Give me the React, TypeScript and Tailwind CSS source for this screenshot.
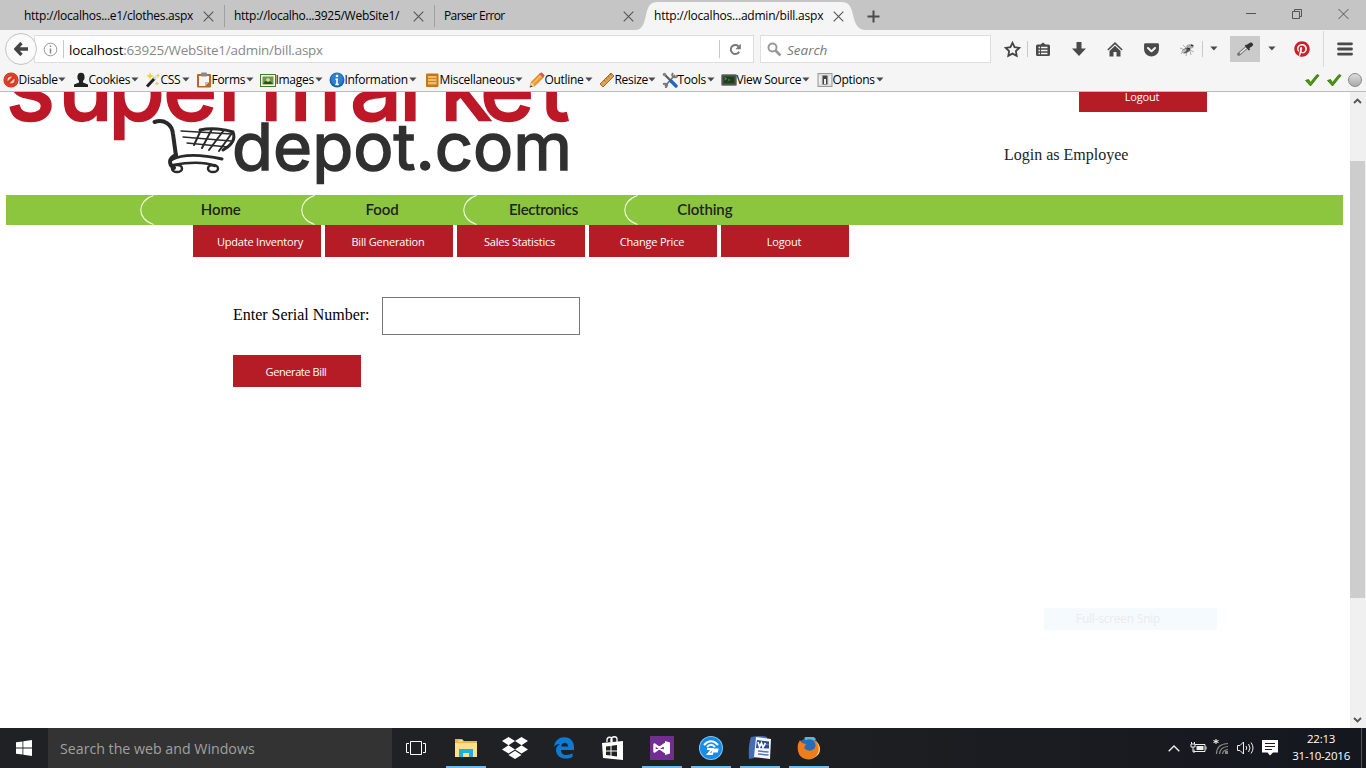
import React from "react";
import { FaPinterest, FaDropbox, FaGetPocket } from "react-icons/fa";

const ui = "font-['Open_Sans','Noto_Sans',sans-serif]";

const X = ({ c = "#555" }: { c?: string }) => (
  <svg width="11" height="11" viewBox="0 0 11 11" className="shrink-0">
    <path d="M.7.7l9.6 9.6M10.3.7L.7 10.3" stroke={c} strokeWidth="1.1" fill="none" />
  </svg>
);

const Caret = () => (
  <svg width="8" height="5" viewBox="0 0 8 5" className="shrink-0">
    <path d="M.3.5h7.2L3.9 4.4z" fill="#4a4a4a" />
  </svg>
);

function TabBar() {
  return (
    <div className="flex h-[30px] w-full items-stretch bg-[#c5c5c5] text-[12px] text-black">
      <div className="flex w-[224px] items-center pt-[2px] pl-[24px]">
        <span className="w-[178.5px] whitespace-nowrap tracking-[-0.27px]">http://localhos...e1/clothes.aspx</span>
        <X />
      </div>
      <div className="mt-[5px] h-[22px] w-px bg-[#a0a0a0]" />
      <div className="flex w-[209px] items-center pt-[2px] pl-[9px]">
        <span className="w-[178.5px] whitespace-nowrap tracking-[-0.28px]">http://localho...3925/WebSite1/</span>
        <X />
      </div>
      <div className="mt-[5px] h-[22px] w-px bg-[#a0a0a0]" />
      <div className="flex w-[200px] items-center pt-[2px] pl-[9px]">
        <span className="w-[178.5px] whitespace-nowrap tracking-[-0.6px]">Parser Error</span>
        <X />
      </div>
      <div className="relative flex w-[233px] items-center pt-[2px] pl-[19px]">
        <svg className="absolute left-0 top-0" width="233" height="30" viewBox="0 0 233 30">
          <path d="M0 30C8 30 9 23 11 15C13 6 15 2 23 2H206C214 2 216 6 218 15C220 23 222 30 231 30Z" fill="#f5f5f5" />
        </svg>
        <span className="relative w-[178.5px] whitespace-nowrap tracking-[-0.21px]">http://localhos...admin/bill.aspx</span>
        <span className="relative"><X /></span>
      </div>
      <div className="flex flex-1 items-center pt-[2px]">
        <svg width="13" height="13" viewBox="0 0 13 13" className="-ml-px"><path d="M6.5.5v12M.5 6.5h12" stroke="#4b4b4b" strokeWidth="2" /></svg>
      </div>
      <div className="flex w-[120px] items-start gap-[36px] pt-[8px]">
        <svg width="10" height="12" viewBox="0 0 10 12"><path d="M0 5.5h10" stroke="#555" /></svg>
        <svg width="10" height="12" viewBox="0 0 10 12" fill="none" stroke="#555"><path d="M.5 3.5h7v7h-7zM2.5 3.5v-2h7v7h-2" /></svg>
        <svg width="11" height="12" viewBox="0 0 11 12"><path d="M.5 1l10 10M10.5 1l-10 10" stroke="#555" /></svg>
      </div>
    </div>
  );
}

const Fly = () => (
  <svg width="17" height="15" viewBox="0 0 17 15" className="shrink-0">
    <path d="M2 12l3-4M7 14l1-5M12 13l-1-4M1 6l5 2M4 3l4 4M15 10l-4-2" stroke="#999" strokeWidth=".8" />
    <ellipse cx="7" cy="8.5" rx="4.5" ry="2.3" transform="rotate(-25 7 8)" fill="#555" />
    <ellipse cx="11" cy="4.5" rx="4" ry="2.3" transform="rotate(-15 11 4.5)" fill="#aaa" />
    <ellipse cx="5" cy="9" rx="3" ry="1.3" transform="rotate(-30 5 9)" fill="#bbb" />
    <path d="M12 3l2 1M8 6l3 1" stroke="#222" strokeWidth="1.2" />
  </svg>
);

function NavBar() {
  return (
    <div className="flex h-[38px] w-full items-center bg-[#f5f5f5]">
      <div className="z-10 ml-[5px] flex h-[32px] w-[32px] shrink-0 items-center justify-center rounded-full border border-[#c4c4c4] bg-[#fafafa]">
        <svg width="14" height="14" viewBox="0 0 14 14"><path d="M7.5 1L1.8 7l5.700 6M2.500 7H14" fill="none" stroke="#444" strokeWidth="3.3" /></svg>
      </div>
      <div className="-ml-[3px] flex h-[28px] w-[720px] shrink-0 items-center border border-[#dedede] bg-white">
        <svg width="15" height="15" viewBox="0 0 15 15" className="ml-[8px]"><circle cx="7.5" cy="7.5" r="6.3" fill="none" stroke="#999" /><path d="M7.5 6.5v5M7.5 3.5v1.6" stroke="#888" strokeWidth="1.5" /></svg>
        <div className="ml-[5px] h-[18px] w-px bg-[#c8c8c8]" />
        <span className="ml-[5px] pt-[2px] text-[13.4px] tracking-[-0.2px] whitespace-nowrap text-[#888]"><span className="text-black">localhost</span>:63925/WebSite1/admin/bill.aspx</span>
        <div className="ml-auto h-[18px] w-px bg-[#c8c8c8]" />
        <svg width="13" height="13" viewBox="0 0 13 13" className="mr-[11px] ml-[9px]"><path d="M10.2 8.8A4.5 4.5 0 1 1 9.4 3.2" fill="none" stroke="#777" strokeWidth="1.9" /><path d="M11.8.7v5.6H6.3z" fill="#777" /></svg>
      </div>
      <div className="ml-[6px] flex h-[28px] w-[231px] shrink-0 items-center border border-[#dedede] bg-white">
        <svg width="15" height="15" viewBox="0 0 15 15" className="ml-[6px]"><circle cx="5.5" cy="5.5" r="4" fill="none" stroke="#999" strokeWidth="2" /><path d="M8.5 8.5l5 5" stroke="#999" strokeWidth="2.6" /></svg>
        <span className="ml-[5px] pt-[2px] text-[13.5px] text-[#777] italic">Search</span>
      </div>
      <svg width="17" height="17" viewBox="0 0 17 17" className="ml-[13px] shrink-0"><path d="M8.5 1.8l2.1 4.3 4.7.7-3.4 3.3.8 4.7-4.2-2.2-4.2 2.2.8-4.7L1.7 6.8l4.7-.7z" fill="none" stroke="#444" strokeWidth="1.8" /></svg>
      <div className="ml-[6px] h-[16px] w-px bg-[#c8c8c8]" />
      <svg width="14" height="15" viewBox="0 0 14 15" className="ml-[8px] shrink-0"><path d="M1.5 2.5h3l2.5-2 2.5 2h3q1.5 0 1.5 1.5v8.5q0 1.5-1.5 1.5h-11Q0 14 0 12.5V4q0-1.5 1.5-1.5z" fill="#4a4a4a" /><path d="M2.5 5.5h1.5M5 5.5h6.5M2.5 8.5h1.5M5 8.5h6.5M2.5 11.5h1.5M5 11.5h6.5" stroke="#f5f5f5" strokeWidth="1.3" /></svg>
      <svg width="14" height="14" viewBox="0 0 14 14" className="ml-[22px] shrink-0"><path d="M4.5 0h5v6.5H14l-7 7.5-7-7.5h4.5z" fill="#4a4a4a" /></svg>
      <svg width="16" height="15" viewBox="0 0 16 15" className="ml-[21px] shrink-0"><path d="M.8 8L8 1.2 15.2 8" fill="none" stroke="#4a4a4a" strokeWidth="1.6" /><path d="M2.5 9L8 3.8 13.5 9v5.500H9.500V10h-3v4.500h-4z" fill="#4a4a4a" /></svg>
      <FaGetPocket size={17} color="#4a4a4a" className="ml-[20px] shrink-0" />
      <span className="ml-[19px]"><Fly /></span>
      <div className="ml-[6px] h-[16px] w-px bg-[#c8c8c8]" />
      <span className="ml-[7px] flex pb-px"><Caret /></span>
      <div className="ml-[12px] flex h-[26px] w-[30px] items-center justify-center bg-[#cbcbcb]">
        <svg width="17" height="14" viewBox="0 0 17 14"><path d="M1.8 12.2L9 6" stroke="#777" strokeWidth="3.4" strokeLinecap="round" /><path d="M3 11.2L10 5.2" stroke="#eee" strokeWidth="1.5" /><path d="M11 4.5l3-2" stroke="#333" strokeWidth="4" strokeLinecap="round" /><path d="M8.5 3l4 5" stroke="#333" strokeWidth="2" /></svg>
      </div>
      <span className="ml-[8px] flex pb-px"><Caret /></span>
      <FaPinterest size={16} color="#cb2027" className="ml-[18px] shrink-0" />
      <div className="ml-[13px] h-[36px] w-px bg-[#dadada]" />
      <svg width="16" height="14" viewBox="0 0 16 14" className="ml-[13px] shrink-0"><path d="M1.5 1.8h13M1.5 7h13M1.5 12.2h13" stroke="#4a4a4a" strokeWidth="2.8" strokeLinecap="round" /></svg>
    </div>
  );
}

const devIcons: Record<string, React.ReactNode> = {
  Disable: <><circle cx="8" cy="8" r="5.6" fill="#f3d5cf" stroke="#c22a14" strokeWidth="4" /><circle cx="8" cy="8" r="5.8" fill="none" stroke="#e4432a" strokeWidth="2.4" /><path d="M3.8 12L12 4" stroke="#d93820" strokeWidth="2.8" /></>,
  Cookies: <><ellipse cx="8" cy="5" rx="3.6" ry="4.3" fill="#222" /><path d="M6 8h4v2.5l5 2V15H1v-2.5l5-2z" fill="#222" /></>,
  CSS: <><path d="M2 14.5L10 6" stroke="#222" strokeWidth="3" /><path d="M9 7l2.5-2.5" stroke="#ddd" strokeWidth="3" /><path d="M5 0l1 3 3 1-3 1-1 3-1-3-3-1 3-1zM13 1l.6 2 2 .6-2 .6-.6 2-.6-2-2-.6 2-.6zM12 9l.6 2 2 .6-2 .6-.6 2-.6-2-2-.6 2-.6z" fill="#f0cf28" /></>,
  Forms: <><rect x="1" y="2" width="14" height="13.5" rx="1" fill="#b96722" /><path d="M3 4h10v6l-4 4H3z" fill="#f4f4f4" /><path d="M13 10l-4 4v-4z" fill="#bbb" /><rect x="5" y=".5" width="6" height="4" rx="1" fill="#888" /></>,
  Images: <><rect x=".5" y="2.5" width="15" height="12" fill="#f8f8f0" stroke="#408020" /><rect x="2.5" y="4.5" width="11" height="8" fill="#6d994b" /><path d="M3 12q4-7 10 0z" fill="#294f17" /><circle cx="8" cy="8" r="1.8" fill="#eee" /><circle cx="8" cy="8" r=".9" fill="#eabf25" /></>,
  Information: <><circle cx="8" cy="8" r="7.5" fill="#1767b5" /><circle cx="8" cy="7" r="6" fill="#2f80cf" /><path d="M8 7v5.5M6.5 7.2H9M6.3 12.5h3.5" stroke="#fff" strokeWidth="1.6" /><circle cx="8" cy="4" r="1.3" fill="#fff" /></>,
  Miscellaneous: <><rect x="2" y="1.5" width="12.5" height="13.5" rx="1" fill="#c87517" /><rect x="4" y="4" width="8.5" height="8.5" fill="#f1bb67" /><path d="M4 6.5h8M4 9.5h8" stroke="#c9832d" /></>,
  Outline: <><path d="M1 15l1.5-5L11 1.5l3.5 3.5L6 13.5z" fill="#f39b22" stroke="#b36016" strokeWidth=".7" /><path d="M4 11.5l8-8" stroke="#ffe0a0" /><path d="M10.5 2l2-1.7 3.3 3.3-1.7 2z" fill="#d95459" /><path d="M1 15l1.5-4.5 3 3z" fill="#f4d7a5" /><path d="M.5 15.5l1.8-2 1 1z" fill="#222" /></>,
  Resize: <><path d="M1 12L12 1l3 3L4 15z" fill="#dfa153" stroke="#a86b25" /><path d="M5 8l1.5 1.5M7 6l1.5 1.5M9 4l1.5 1.5M11 2l1.5 1.5" stroke="#98591e" strokeWidth=".7" /></>,
  Tools: <><path d="M3 14L13 3" stroke="#777" strokeWidth="1.8" /><path d="M2 2l7 7" stroke="#555" strokeWidth="2" /><path d="M9 9l5 5" stroke="#2467bd" strokeWidth="3.4" strokeLinecap="round" /><path d="M11 1q-2 3 1 4 3 1 3.5-2M1 12q3-1 4 1 0 2-2 2.5" fill="none" stroke="#777" strokeWidth="2" /><circle cx="2.5" cy="2.5" r="1.8" fill="#888" /></>,
  "View Source": <><rect x=".5" y="2.5" width="15" height="11" rx="1" fill="#555" stroke="#888" /><rect x="2.5" y="4.5" width="11" height="7" fill="#1d3f1c" /><path d="M3.5 5.5l2 1.2-2 1.2M7 8h2" fill="none" stroke="#53c744" strokeWidth=".8" /></>,
  Options: <><rect x="1" y="1.5" width="14" height="13" fill="#ddd" stroke="#999" /><rect x="5.5" y="3.5" width="5" height="9" fill="#444" /><rect x="7" y="7" width="2" height="5" fill="#eee" /><path d="M3 4v8M13 4v8" stroke="#fff" /></>,
};

const devItems = [
  ["Disable", "w-[70px]", "w-[39px]"],
  ["Cookies", "w-[72px]", "w-[42px]"],
  ["CSS", "w-[51px]", "w-[21px]"],
  ["Forms", "w-[64px]", "w-[34px]"],
  ["Images", "w-[69px]", "w-[39px]"],
  ["Information", "w-[95px]", "w-[64px]"],
  ["Miscellaneous", "w-[105px]", "w-[75px]"],
  ["Outline", "w-[70px]", "w-[40px]"],
  ["Resize", "w-[63px]", "w-[33px]"],
  ["Tools", "w-[59px]", "w-[29px]"],
  ["View Source", "w-[96px]", "w-[65px]"],
  ["Options", "w-[70px]", "w-[43px]"],
];

const Check = () => <svg width="16" height="14" viewBox="0 0 16 14"><path d="M1.5 7.5l3-1 2 3L13 1.5l2 1L6.5 13z" fill="#4b9a0b" stroke="#2f7001" strokeWidth=".8" /></svg>;

function DevBar() {
  return (
    <div className="flex h-[24px] w-full items-center border-b border-[#bcbcbc] bg-[#f5f5f5] pl-[2.5px] text-[12px] tracking-[-0.3px] text-black">
      {devItems.map(([name, w, tw]) => (
        <div key={name} className={`flex shrink-0 items-center ${w}`}>
          <svg width="16" height="16" viewBox="0 0 16 16" className="shrink-0">{devIcons[name]}</svg>
          <span className={`shrink-0 whitespace-nowrap ${tw}`}>{name}</span>
          <Caret />
        </div>
      ))}
      <div className="ml-auto flex items-center gap-[6px] pr-[4px]">
        <Check /><Check />
        <div className="h-[14px] w-[14px] rounded-full border border-[#888] bg-linear-to-b from-[#ddd] to-[#aaa]" />
      </div>
    </div>
  );
}

function Logo() {
  return (
    <svg width="600" height="103" viewBox="0 92 600 103" className="block shrink-0">
      <g fontFamily="Inter, sans-serif">
        <text x="6 58 108 163 218 260 350 399 440 480 539" y="120" fontSize="93" fontWeight="400" fill="#bd1828" stroke="#bd1828" strokeWidth="2.5">supermarket</text>
        <text x="232" y="169.5" fontSize="65" fontWeight="400" fill="#303030" stroke="#303030" strokeWidth="1.5" textLength="340" lengthAdjust="spacingAndGlyphs">depot.com</text>
      </g>
      <g fill="none" stroke="#292929" strokeLinecap="round">
        <path d="M154.5 122C164 119 172 124 173 134L176 156" strokeWidth="4" />
        <path d="M176 155C169 158 168 164 174 168" strokeWidth="4" />
        <path d="M171 160C184 153 204 155 222 159" strokeWidth="3" />
        <path d="M173 165C190 162 205 162 215 166" strokeWidth="2.5" />
        <ellipse cx="177" cy="168.5" rx="5" ry="3.6" strokeWidth="2.5" />
        <ellipse cx="213" cy="168.5" rx="5" ry="3.6" strokeWidth="2.5" />
        <path d="M200 130C211 127.5 225 129 233 132Q237 142 223 150" strokeWidth="3" />
        <path d="M181 131L232 134M183 137L231 141M187 143L228 147" strokeWidth="1.3" />
        <path d="M201 130L194 145M212 129L202 148M224 130L209 150M232 133L219 151" strokeWidth="2" />
      </g>
    </svg>
  );
}

const Red = ({ children, shift = "" }: { children: React.ReactNode; shift?: string }) => (
  <button className={`flex h-[32px] w-[128px] shrink-0 items-center justify-center bg-[#b61c26] pt-[2px] text-[11px] tracking-[-0.2px] whitespace-nowrap text-white ${shift}`}>{children}</button>
);

function Page() {
  return (
    <div className="flex h-[636px] w-full bg-white">
      <div className="flex h-full w-[1350px] shrink-0 flex-col overflow-hidden">
        <div className="flex h-[103px] shrink-0 items-start">
          <Logo />
          <div className="ml-[404px] flex h-[103px] flex-col">
            <div className="-mt-[12px] ml-[75px]"><Red shift="pr-[2px]">Logout</Red></div>
            <span className="mt-[31px] font-['Liberation_Serif',serif] text-[16px] leading-[24px] text-[#222]">Login as Employee</span>
          </div>
        </div>
        <div className="ml-[6px] flex h-[30px] w-[1337px] shrink-0 bg-[#8cc63f] pl-[134px]">
          {[
            ["Home", "tracking-[-0.1px]"],
            ["Food", "tracking-[-0.1px]"],
            ["Electronics", "tracking-[-0.35px]"],
            ["Clothing", "tracking-[-0.1px]"],
          ].map(([t, track]) => (
            <div key={t} className={`relative flex h-full w-[161.4px] items-center justify-center pb-px font-['Lato',sans-serif] text-[15px] font-semibold text-[#222] ${track}`}>
              <svg className="absolute top-0 left-0" width="18" height="30" viewBox="0 0 18 30"><path d="M13.5.5C-3.5 6-3.5 24 13.5 29.5" fill="none" stroke="#f2f9e5" strokeWidth="1.1" /></svg>
              {t}
            </div>
          ))}
        </div>
        <div className="flex gap-[4px] pl-[193px]">
          <Red shift="pl-[6px]">Update Inventory</Red>
          <Red shift="pr-[2px]">Bill Generation</Red>
          <Red shift="pr-[3px]">Sales Statistics</Red>
          <Red shift="pr-[2px]">Change Price</Red>
          <Red shift="pr-[2px]">Logout</Red>
        </div>
        <div className="mt-[40px] flex items-center pl-[233px]">
          <span className="w-[149px] pb-[2px] font-['Liberation_Serif',serif] text-[16px] leading-[24px] tracking-[-0.02px] text-black">Enter Serial Number:</span>
          <input className="h-[38px] w-[198px] border border-[#767676] bg-white px-2 text-base outline-none" />
        </div>
        <div className="mt-[20px] pl-[233px]"><Red shift="pr-[2px]"><span className="tracking-[-0.4px]">Generate Bill</span></Red></div>
        <div className="mt-[221px] ml-[1044px] flex h-[22px] w-[173px] shrink-0 items-center bg-[#f5fafe] pl-[32px] text-[12px] tracking-[-0.25px] whitespace-nowrap text-[#ebebed]">Full-screen Snip</div>
      </div>
      <div className="flex h-full w-[16px] shrink-0 flex-col items-center bg-[#f0f0f0]">
        <svg width="9" height="6" viewBox="0 0 9 6" className="mt-[6px] mr-px"><path d="M1 5l3.5-3.5L8 5" fill="none" stroke="#555" strokeWidth="1.9" /></svg>
        <div className="mt-[57px] mr-px h-[437px] w-[15px] bg-[#cdcdcd]" />
        <svg width="9" height="6" viewBox="0 0 9 6" className="mt-auto mr-px mb-[5px]"><path d="M1 1l3.5 3.5L8 1" fill="none" stroke="#555" strokeWidth="1.9" /></svg>
      </div>
    </div>
  );
}

const Slot = ({ children, active }: { children: React.ReactNode; active?: boolean }) => (
  <div className="flex h-full w-[49px] shrink-0 flex-col items-center">
    <div className="flex h-[38px] items-center pt-[2px]">{children}</div>
    {active && <div className="h-[2px] w-[40px] bg-[#76b9ed]" />}
  </div>
);

function Taskbar() {
  return (
    <div className="flex h-[40px] w-full items-center bg-linear-to-r from-[#202124] via-[#202124] to-[#14171e] text-white">
      <div className="flex w-[48px] justify-center"><svg width="16" height="16" viewBox="0 0 16 16" fill="#fff"><path d="M0 2.3L6.5 1.4v6.1H0zM7.3 1.2L16 0v7.5H7.3zM0 8.4h6.5v6.2L0 13.7zM7.3 8.4H16V16l-8.7-1.2z" /></svg></div>
      <div className="flex h-full w-[344px] items-center bg-[#333] pt-[2px] pl-[12px] text-[14.2px] text-[#a0a0a0]"><span>Search the web and Windows</span></div>
      <div className="flex w-[49px] justify-center pr-px"><svg width="20" height="14" viewBox="0 0 20 14" fill="none" stroke="#fff"><path d="M4.5.5h11v13h-11zM3 2.5H.5v9H3M17 2.5h2.5v9H17" /></svg></div>
      <Slot active><svg width="22" height="20" viewBox="0 0 22 20"><path d="M0 1h7l2 2h13v16H0z" fill="#e8b84a" /><path d="M0 5h22v14H0z" fill="#fde08a" /><path d="M4 11h14v8h-4v-4H8v4H4z" fill="#20ade5" /><path d="M3 3h5" stroke="#fff3b8" /></svg></Slot>
      <Slot><FaDropbox size={26} color="#fff" /></Slot>
      <Slot><svg width="20" height="22" viewBox="0 0 20 22"><path d="M0 10C1-3 20-3 20 10v3H7c0 6 7 6 11.5 3.3V20C10 24 2 20 2 13c0-3 2-5 4-6-3 0-5 1-6 3zM7.2 9.5h7C14 5 8 4 7.2 9.5z" fill="#0b7bd8" /></svg></Slot>
      <Slot><svg width="22" height="24" viewBox="0 0 22 24"><path d="M5 6V4c0-3 4-4 5-1V6M9 6V3c1-3 6-3 6 0v3" fill="none" stroke="#fff" strokeWidth="1.3" /><path d="M0 7l21-2v19L1 22z" fill="#fff" /><path d="M4 10.5l4.5-.6v4.6H4zM9.5 9.7l5.5-.8v5.6H9.5zM4 15.5h4.5v4L4 19zM9.5 15.5H15v5l-5.5-.8z" fill="#202124" /></svg></Slot>
      <Slot active><div className="flex h-[24px] w-[24px] items-center justify-center bg-[#732c91]"><svg width="18" height="16" viewBox="0 0 18 16"><path d="M1.5 4.5v7L12 4v8z" fill="none" stroke="#fff" strokeWidth="2.4" strokeLinejoin="round" /><path d="M12 1l5 1.5v11L12 15z" fill="#fff" /></svg></div></Slot>
      <Slot active><svg width="24" height="24" viewBox="0 0 24 24"><circle cx="12" cy="12" r="12" fill="#83c8f7" /><circle cx="12" cy="12" r="11" fill="#168de8" /><path d="M5 9Q12 1.5 19 9M8 11Q12 6.5 16 11" fill="none" stroke="#fff" strokeWidth="2" /><path d="M8 13h5l-4 5h4l1.5-4.5h4l-.5 2h-4" fill="none" stroke="#fff" strokeWidth="1.9" /></svg></Slot>
      <Slot active><svg width="24" height="24" viewBox="0 0 24 24"><path d="M3 1q9-2 16 0v20q-10 0-18 2Q0 9 3 1z" fill="#466dae" /><path d="M8 1l15 2-1 20-16-2z" fill="#f5f7fc" /><path d="M9 4l12 1.5v7L8 12z" fill="#284b93" /><path d="M10 6l1.5 5L13.5 7l1.5 4.5L17.5 7" fill="none" stroke="#fff" strokeWidth="1.7" /><path d="M10 15l10.5 1M10 18l10.5 1M18 8.5h3" stroke="#5878b5" strokeWidth="1.5" /></svg></Slot>
      <Slot active><svg width="23" height="23" viewBox="0 0 23 23"><circle cx="12" cy="11" r="10.5" fill="#286cb5" /><path d="M8 2q6-3 10 1" stroke="#5eb5e5" strokeWidth="3" fill="none" /><path d="M1 7L3 3l2 3 4 1-2 4q5 5 10 1c3-3 1-7-1-9 8 3 8 11 4 15-5 7-15 5-18-1Q0 13 1 7z" fill="#ef7d1c" /><path d="M18 4c6 5 4 14-2 17 8-2 10-12 2-17z" fill="#ffd43b" /></svg></Slot>
      <div className="ml-[335px] flex items-center">
        <svg width="12" height="7" viewBox="0 0 12 7"><path d="M.7 6.3L6 1l5.3 5.3" fill="none" stroke="#eee" strokeWidth="1.4" /></svg>
        <svg width="17" height="12" viewBox="0 0 17 12" className="ml-[10px]"><path d="M5 2.5h10v7H4v-2M16 4.5v3" fill="none" stroke="#eee" /><path d="M6.5 4h7v4h-7z" fill="#eee" /><path d="M1 2h4v3H1zM3 5v5h2M1.5 0v2M4.5 0v2" fill="none" stroke="#eee" /></svg>
        <svg width="16" height="17" viewBox="0 0 16 17" className="mb-[3px] ml-[6px]"><path d="M3 1v5M.5 2.5l5 2M.5 4.5l5-2" stroke="#fff" /><path d="M3.5 16Q3.5 6 15 5.5M6.5 16Q7 9 15 8.5M9.5 16q.5-4 5.5-4.5" fill="none" stroke="#888" strokeWidth="1.2" /><path d="M12 13h3v3h-3z" fill="#888" /></svg>
        <svg width="17" height="14" viewBox="0 0 17 14" className="ml-[8px]" fill="none" stroke="#eee"><path d="M.5 4.5h2.5L6.5 1v12L3 9.5H.5zM9 5q1.5 2 0 4M11.5 3q3 4 0 8M14 1.5q4 5.5 0 11" /></svg>
        <svg width="16" height="16" viewBox="0 0 16 16" className="ml-[8px]"><path d="M0 0h16v12.5h-5L8 15.5l-2.5-3H0z" fill="#fff" /><path d="M3 3.5h10M3 6.5h10M3 9.5h7" stroke="#1a1c20" /></svg>
      </div>
      <div className="mr-[11px] ml-auto flex flex-col items-center pb-[3px] text-[11.5px] leading-[17px] tracking-[-0.22px]"><span>22:13</span><span>31-10-2016</span></div>
      <div className="mr-[4px] h-full w-px bg-[#555]" />
    </div>
  );
}

export default function App() {
  return (
    <div className={`flex h-[768px] w-[1366px] flex-col overflow-hidden bg-[#f5f5f5] ${ui}`}>
      <TabBar />
      <NavBar />
      <DevBar />
      <Page />
      <Taskbar />
    </div>
  );
}
